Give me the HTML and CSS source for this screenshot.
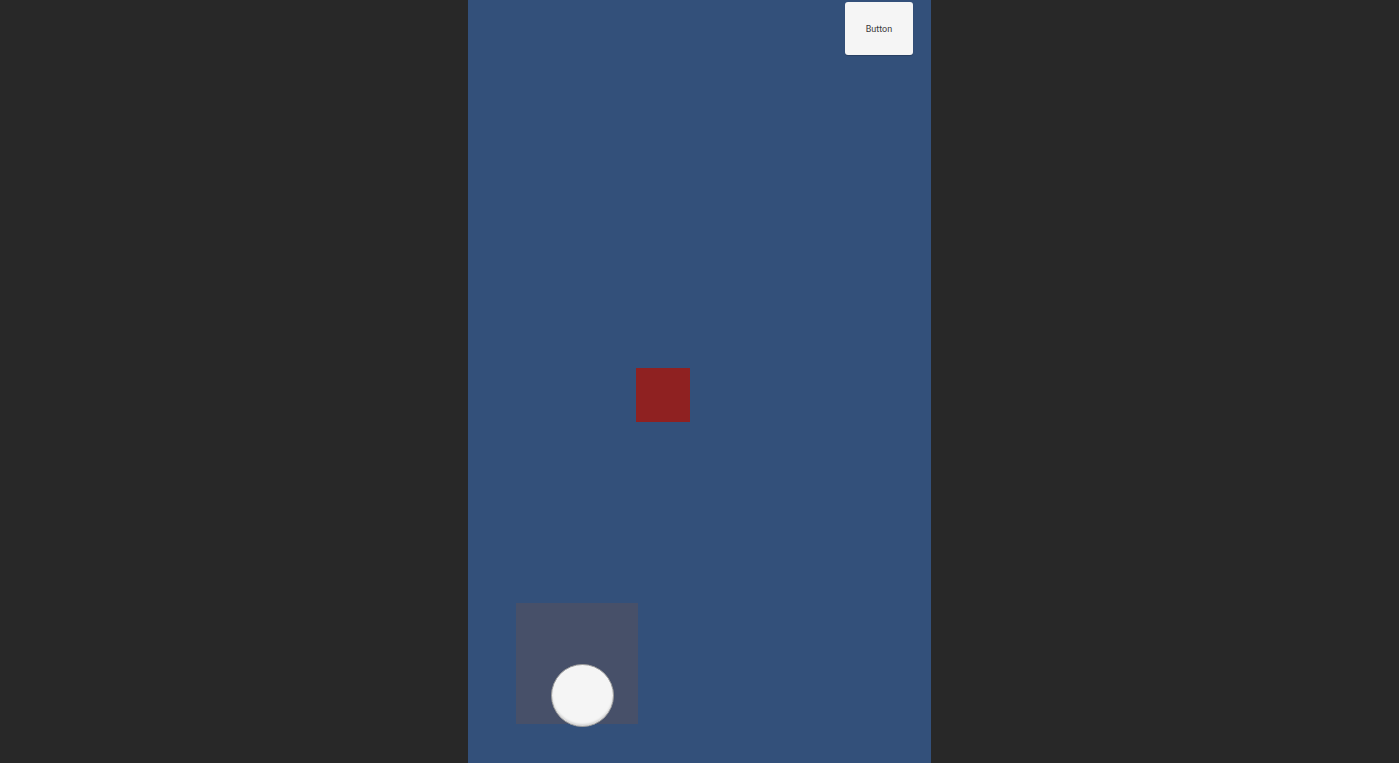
FILE: index.html
```html
<!DOCTYPE html>
<html>
<head>
<meta charset="utf-8">
<link rel="stylesheet" href="styles.css">
</head>
<body>
<div class="stage">
  <div class="game">
    <button class="btn">Button</button>
    <div class="player"></div>
    <div class="joystick">
      <div class="knob"></div>
    </div>
  </div>
</div>
</body>
</html>
```
FILE: styles.css
```css
html, body {
  margin: 0;
  padding: 0;
  height: 100%;
  background: #282828;
  overflow: hidden;
}
.stage {
  display: flex;
  justify-content: center;
  height: 763px;
}
.game {
  position: relative;
  width: 463px;
  height: 763px;
  background: #33507a;
}
.btn {
  position: absolute;
  left: 377px;
  top: 2px;
  width: 68px;
  height: 53px;
  border: none;
  border-radius: 3px;
  background: #f5f5f5;
  color: #3a3a3a;
  font-family: "Roboto", "Liberation Sans", sans-serif;
  font-size: 9px;
  padding: 0;
  box-shadow: 0 1px 1px rgba(0,0,0,0.2);
}
.player {
  position: absolute;
  left: 168px;
  top: 368px;
  width: 54px;
  height: 54px;
  background: #8f2121;
}
.joystick {
  position: absolute;
  left: 48px;
  top: 603px;
  width: 122px;
  height: 121px;
  background: #475069;
}
.knob {
  position: absolute;
  left: 35px;
  top: 61px;
  width: 61px;
  height: 61px;
  border-radius: 50%;
  background: #f5f5f5;
  border: 1px solid #9a9a9a;
  box-shadow: inset 0 -2px 2px rgba(0,0,0,0.12);
}
```
